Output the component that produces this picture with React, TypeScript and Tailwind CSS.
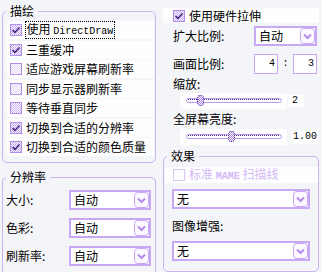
import { useId } from "react";

const mono = "font-['Liberation_Mono',monospace] text-[10px]";

function Check({ checked, hot, disabled }: { checked?: boolean; hot?: boolean; disabled?: boolean }) {
  const id = "p" + useId().replace(/[^a-zA-Z0-9]/g, "");
  if (disabled) {
    return (
      <svg width="12" height="12" className="shrink-0">
        <rect x="0.5" y="0.5" width="11" height="11" fill="#fff" stroke="#d9c6f7" />
      </svg>
    );
  }
  const dot = checked ? "#c3a6f2" : hot ? "#cdb5f5" : "#e2d5f9";
  return (
    <svg width="12" height="12" className="shrink-0">
      <defs>
        <pattern id={id} width="2" height="2" patternUnits="userSpaceOnUse">
          <rect width="2" height="2" fill="#fff" />
          <rect width="1" height="1" fill={dot} />
          <rect x="1" y="1" width="1" height="1" fill={dot} />
        </pattern>
      </defs>
      <rect x="0.5" y="0.5" width="11" height="11" fill={`url(#${id})`} stroke="#b48eea" />
      {checked && (
        <path d="M2.5 6 L4.8 8.5 L9.5 3.5" fill="none" stroke="#3c1c7c" strokeWidth="1.5" />
      )}
    </svg>
  );
}

function Arrow() {
  return (
    <svg width="15" height="16" className="shrink-0">
      <rect x="0.5" y="0.5" width="14" height="15" rx="3" fill="#fbf9ff" stroke="#c6a6f2" />
      <path d="M4 6.5 L7.5 10 L11 6.5" fill="none" stroke="#b58cec" strokeWidth="2" />
    </svg>
  );
}

function Select({ value, className }: { value: string; className: string }) {
  return (
    <div
      className={`flex h-[20px] items-center justify-between border-2 border-[#c8a8f4] bg-white pl-[3px] ${className}`}
    >
      <span className="leading-[14px]">{value}</span>
      <Arrow />
    </div>
  );
}

function Slider({ pos }: { pos: number }) {
  const id = "s" + useId().replace(/[^a-zA-Z0-9]/g, "");
  return (
    <svg width="107" height="16" className="shrink-0">
      <defs>
        <pattern id={id} width="2" height="2" patternUnits="userSpaceOnUse">
          <rect width="2" height="2" fill="#fff" />
          <rect width="1" height="1" fill="#a77ee8" />
          <rect x="1" y="1" width="1" height="1" fill="#a77ee8" />
        </pattern>
      </defs>
      <rect x="6.5" y="5.5" width="95" height="4" rx="2" fill="#fff" stroke="#b898ec" />
      <path d="M8 6.5 H100" stroke="#4a2a96" strokeDasharray="1 1" />
      <rect x={pos - 3 + 0.5} y="2.5" width="6" height="10" rx="2" fill={`url(#${id})`} stroke="#5a2ca4" strokeDasharray="1 1" />
    </svg>
  );
}

const drawOptions = [
  { label: "三重缓冲", checked: true },
  { label: "适应游戏屏幕刷新率" },
  { label: "同步显示器刷新率" },
  { label: "等待垂直同步", hot: true },
  { label: "切换到合适的分辨率", checked: true },
  { label: "切换到合适的颜色质量", checked: true },
];

const resolution = [
  { label: "大小:", value: "自动" },
  { label: "色彩:", value: "自动" },
  { label: "刷新率:", value: "自动" },
];

export default function App() {
  return (
    <div className="flex h-[272px] w-[322px] gap-[7px] overflow-hidden bg-[#f4f5f9] pl-[2px] font-['Noto_Sans_CJK_SC','Noto_Sans',sans-serif] text-[12px] leading-[14px] text-black">
      {/* left column */}
      <div className="flex w-[154px] shrink-0 flex-col">
        <fieldset className="mt-[4px] rounded-[5px] border border-[#cdb2f4] px-0 pb-[6px]">
          <legend className="ml-[3px] px-[4px] leading-[14px]">描绘</legend>
          <div className="flex flex-col gap-[1.5px] pl-[4px] pr-[1px] pt-[3px]">
            <div className="flex h-[18px] items-center gap-[3px] bg-[#fefeff] pl-[3px]">
              <Check checked />
              <span className="border border-dotted border-black px-[0.5px] leading-[13px]">
                使用 <span className={mono}>DirectDraw</span>
              </span>
            </div>
            {drawOptions.map((o) => (
              <div key={o.label} className="flex h-[18px] items-center gap-[4px] bg-[#fefeff] pl-[3px]">
                <Check checked={o.checked} hot={o.hot} />
                <span>{o.label}</span>
              </div>
            ))}
          </div>
        </fieldset>

        <fieldset className="mt-[7px] rounded-[5px] border border-[#cdb2f4] px-0 pb-[10px]">
          <legend className="ml-[3px] px-[4px] leading-[14px]">分辨率</legend>
          <div className="flex flex-col gap-[8px] pl-[3px] pr-[4px] pt-[6px]">
            {resolution.map((r) => (
              <div key={r.label} className="flex h-[20px] items-center justify-between">
                <span>{r.label}</span>
                <Select value={r.value} className="w-[82px]" />
              </div>
            ))}
          </div>
        </fieldset>
      </div>

      {/* right column */}
      <div className="flex w-[156px] shrink-0 flex-col">
        <div className="mt-[8px] flex h-[19px] items-center gap-[4px] bg-[#fefeff] pl-[10px]">
          <Check checked />
          <span>使用硬件拉伸</span>
        </div>
        <div className="mt-[3px] flex h-[20px] items-center justify-between pl-[10px] pr-[2px]">
          <span>扩大比例:</span>
          <Select value="自动" className="w-[63px]" />
        </div>
        <div className="mt-[8px] flex h-[20px] items-center justify-between pl-[10px] pr-[2px]">
          <span>画面比例:</span>
          <div className="flex items-center">
            <div className={`flex h-[20px] w-[24px] items-center justify-end border border-[#c8a8f4] bg-white pr-[2px] ${mono}`}>4</div>
            <span className={`w-[15px] text-center ${mono}`}>:</span>
            <div className={`flex h-[20px] w-[24px] items-center justify-end border border-[#c8a8f4] bg-white pr-[2px] ${mono}`}>3</div>
          </div>
        </div>
        <div className="mt-[3px] h-[14px] pl-[10px]">缩放:</div>
        <div className="mt-[2px] flex h-[16px] items-center">
          <div className="ml-[17px] h-[16px] bg-[#fefeff]">
            <Slider pos={20} />
          </div>
          <div className={`ml-[1px] flex h-[12px] w-[16px] items-center bg-[#fefeff] pl-[4px] ${mono}`}>2</div>
        </div>
        <div className="mt-[3px] h-[14px] pl-[10px]">全屏幕亮度:</div>
        <div className="mt-[3px] flex h-[17px] items-center">
          <div className="ml-[17px] h-[16px] bg-[#fefeff]">
            <Slider pos={51} />
          </div>
          <div className={`ml-[4px] flex h-[13px] w-[27px] items-center bg-[#fefeff] pl-[2px] ${mono}`}>1.00</div>
        </div>

        <fieldset className="mt-[4px] rounded-[5px] border border-[#cdb2f4] px-0 pb-[10px]">
          <legend className="ml-[3px] px-[4px] leading-[14px]">效果</legend>
          <div className="flex flex-col">
            <div className="ml-[1px] mt-[4px] flex h-[16px] items-center gap-[4px] bg-[#fefeff] pl-[8px] text-[#d2b8f6]">
              <Check disabled />
              <span>
                标准 <span className={`${mono} font-bold`}>MAME</span> 扫描线
              </span>
            </div>
            <Select value="无" className="ml-[8px] mt-[6px] w-[138px]" />
            <div className="mt-[10px] h-[14px] pl-[8px]">图像增强:</div>
            <Select value="无" className="ml-[8px] mt-[8px] w-[138px]" />
          </div>
        </fieldset>
      </div>
    </div>
  );
}
